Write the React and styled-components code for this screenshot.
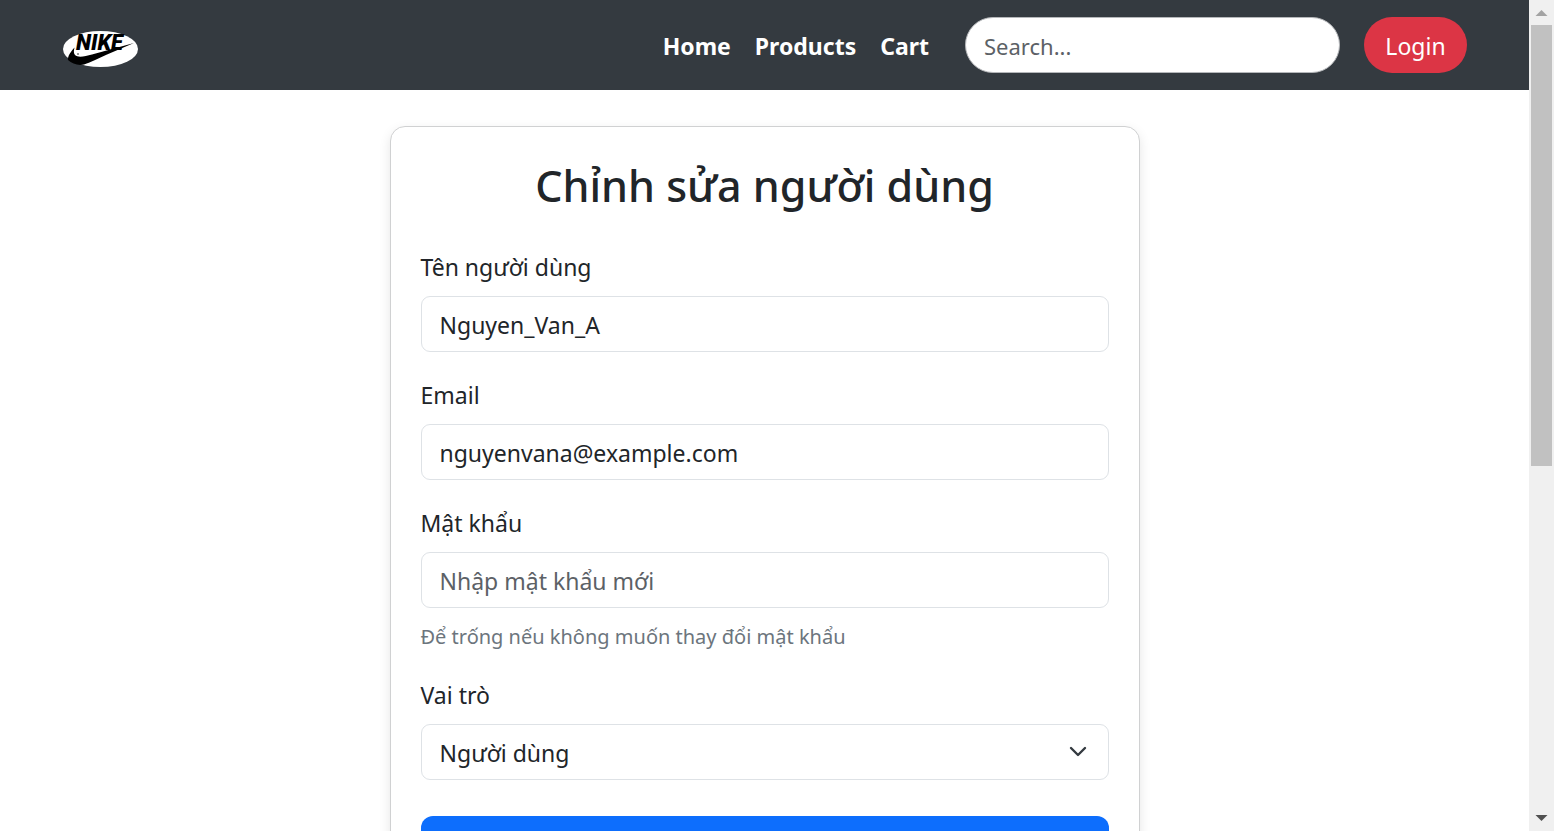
import React from "react";
import styled, { createGlobalStyle } from "styled-components";

const GlobalStyle = createGlobalStyle`
  *, *::before, *::after { box-sizing: border-box; }
  html { scrollbar-width: none; }
  body {
    margin: 0;
    background: #fff;
    color: #212529;
    font-family: "Segoe UI", "Noto Sans", "Open Sans", sans-serif;
    font-size: 23px;
    line-height: 36px;
  }
  input, select, button { font: inherit; color: inherit; }
`;

const Page = styled.div`
  display: flex;
  align-items: flex-start;
`;

const Content = styled.div`
  flex: 1;
  min-width: 0;
`;

const Navbar = styled.header`
  display: flex;
  align-items: center;
  justify-content: space-between;
  min-height: 90px;
  padding: 16px 62px 16px 63px;
  background: #343a40;
`;

const LogoLink = styled.a`
  display: block;
  padding-top: 7px;
  svg { display: block; }
`;

const NavActions = styled.div`
  display: flex;
  align-items: center;
  gap: 24px;
`;

const NavLinks = styled.nav`
  display: flex;
  gap: 24px;
  padding-top: 2px;
  margin-right: 12px;
`;

const NavLink = styled.a`
  color: #fff;
  font-weight: 700;
  text-decoration: none;
`;

const SearchInput = styled.input`
  width: 375px;
  height: 56px;
  padding: 2px 18px 0;
  border: 1px solid #b5b7ba;
  border-radius: 30px;
  background: #fff;
  font-size: 22px;
  &::placeholder { color: #5c6166; opacity: 1; }
`;

const LoginButton = styled.button`
  height: 56px;
  min-width: 103px;
  padding: 2px 20px 0;
  border: 0;
  border-radius: 30px;
  background: #dc3545;
  color: #fff;
`;

const Card = styled.main`
  max-width: 750px;
  margin: 36px auto;
  padding: 30px;
  border: 1px solid #d0d1d2;
  border-radius: 15px;
  background: #fff;
  box-shadow: 0 4px 12px rgba(0, 0, 0, 0.1);
`;

const Title = styled.h1`
  margin: 0 0 34px;
  font-size: 43px;
  font-weight: 500;
  line-height: 58px;
  text-align: center;
`;

const Form = styled.form`
  display: flex;
  flex-direction: column;
  gap: 25px;
`;

const Label = styled.label`
  display: block;
  margin-bottom: 11px;
`;

const Input = styled.input`
  display: block;
  width: 100%;
  height: 56px;
  padding: 2px 18px 0;
  border: 1px solid #dee2e6;
  border-radius: 9px;
  background: #fff;
  &::placeholder { color: #5c6166; opacity: 1; }
`;

const SelectBox = styled.div`
  display: grid;
  align-items: center;
  > * { grid-area: 1 / 1; }
  > svg { justify-self: end; margin-right: 19px; pointer-events: none; }
`;

const Select = styled(Input)`
  appearance: none;
`;

const Hint = styled.small`
  display: block;
  padding-top: 13px;
  color: #6c757d;
  font-size: 20px;
  line-height: 31px;
`;

const SubmitButton = styled.button`
  width: 100%;
  margin-top: 11px;
  padding: 18px;
  border: 0;
  border-radius: 12px;
  background: #0d6efd;
  color: #fff;
`;

const ScrollTrack = styled.div`
  position: sticky;
  top: 0;
  display: flex;
  flex-direction: column;
  width: 25px;
  height: 100vh;
  background: #f0f0f0;
`;

const ScrollArrow = styled.svg`
  display: block;
  width: 25px;
  height: 25px;
  flex: none;
`;

const ScrollRail = styled.div`
  flex: 1;
  padding: 0 2px;
`;

const ScrollThumb = styled.div`
  height: 56.5%;
  background: #c1c1c1;
`;

function Logo() {
  return (
    <svg width="75" height="37" viewBox="0 0 75 37" role="img" aria-label="Nike">
      <ellipse cx="37.5" cy="19" rx="37.5" ry="18" fill="#fff" />
      <text
        x="13"
        y="20"
        fontFamily="Roboto, sans-serif"
        fontSize="22"
        fontWeight="900"
        fontStyle="italic"
      >
        NIKE
      </text>
      <path
        d="M11.5 17.5C8 21.5 4.5 26 5 30C9 33.5 15 36 21 34.5C28 32 36 28 44 24.5L71 13L29 24.5C22 26.4 15 28 12 25C10.5 23.3 10.7 20.5 11.5 17.5Z"
        fill="#000"
      />
      <circle cx="15" cy="24" r="1" fill="#777" />
    </svg>
  );
}

function Field({ id, label, hint, children }) {
  return (
    <div>
      <Label htmlFor={id}>{label}</Label>
      {children}
      {hint && <Hint id={`${id}-hint`}>{hint}</Hint>}
    </div>
  );
}

export default function App() {
  return (
    <>
      <GlobalStyle />
      <Page>
        <Content>
          <Navbar>
            <LogoLink href="#home">
              <Logo />
            </LogoLink>
            <NavActions>
              <NavLinks>
                <NavLink href="#home">Home</NavLink>
                <NavLink href="#products">Products</NavLink>
                <NavLink href="#cart">Cart</NavLink>
              </NavLinks>
              <SearchInput type="search" placeholder="Search..." aria-label="Search" />
              <LoginButton type="button">Login</LoginButton>
            </NavActions>
          </Navbar>
          <Card>
            <Title>Chỉnh sửa người dùng</Title>
            <Form>
              <Field id="username" label="Tên người dùng">
                <Input id="username" type="text" defaultValue="Nguyen_Van_A" />
              </Field>
              <Field id="email" label="Email">
                <Input id="email" type="email" defaultValue="nguyenvana@example.com" />
              </Field>
              <Field
                id="password"
                label="Mật khẩu"
                hint="Để trống nếu không muốn thay đổi mật khẩu"
              >
                <Input
                  id="password"
                  type="password"
                  placeholder="Nhập mật khẩu mới"
                  aria-describedby="password-hint"
                />
              </Field>
              <Field id="role" label="Vai trò">
                <SelectBox>
                  <Select as="select" id="role" defaultValue="user">
                    <option value="user">Người dùng</option>
                  </Select>
                  <svg width="24" height="18" viewBox="0 0 24 18" aria-hidden="true">
                    <path
                      d="M5 5L12 12L19 5"
                      fill="none"
                      stroke="#343a40"
                      strokeWidth="2.4"
                      strokeLinecap="round"
                      strokeLinejoin="round"
                    />
                  </svg>
                </SelectBox>
              </Field>
              <SubmitButton type="submit">Cập nhật</SubmitButton>
            </Form>
          </Card>
        </Content>
        <ScrollTrack aria-hidden="true">
          <ScrollArrow viewBox="0 0 25 25">
            <path d="M12.5 10L18.5 16H6.5Z" fill="#a3a3a3" />
          </ScrollArrow>
          <ScrollRail>
            <ScrollThumb />
          </ScrollRail>
          <ScrollArrow viewBox="0 0 25 25">
            <path d="M12.5 15L18.5 9H6.5Z" fill="#505050" />
          </ScrollArrow>
        </ScrollTrack>
      </Page>
    </>
  );
}
